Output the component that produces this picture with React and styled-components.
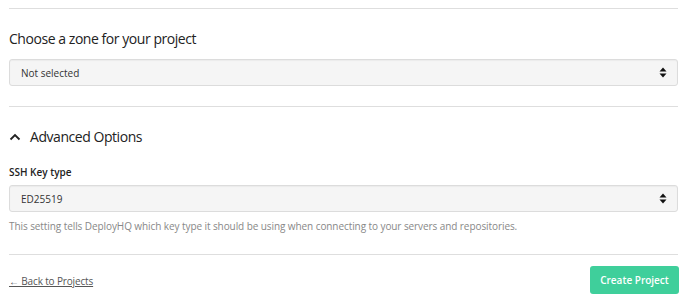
import styled, { createGlobalStyle } from "styled-components"

const GlobalStyle = createGlobalStyle`
  body {
    margin: 0;
    background: #fff;
    font-family: "Open Sans", "Noto Sans", sans-serif;
    color: #333;
  }
`

const Page = styled.div`
  padding: 8px 2px 0 9px;
`

const Rule = styled.hr`
  border: 0;
  border-top: 1px solid #dedede;
  margin: 0;
`

const Section = styled.section`
  padding: ${(p) => p.$pad || "20px 0 20px"};
`

const Heading = styled.h2`
  display: flex;
  align-items: center;
  gap: 9px;
  margin: 0 0 ${(p) => p.$gap || "10px"};
  font-size: 14px;
  font-weight: 400;
  line-height: 20px;
  color: #222;
  letter-spacing: -0.45px;
`

const Label = styled.label`
  display: block;
  font-size: 10px;
  font-weight: 600;
  line-height: 16px;
  margin-bottom: 5px;
  color: #222;
`

const SelectBox = styled.div`
  height: 27px;
  box-sizing: border-box;
  border: 1px solid #dcdcdc;
  border-radius: 3px;
  background: #f5f5f5;
  box-shadow: inset 0 1px 1px rgba(0, 0, 0, 0.04);
  display: flex;
  align-items: center;
  justify-content: space-between;
  padding: 0 10px 0 11px;
  font-size: 10px;
  color: #333;
`

const Help = styled.p`
  margin: 7px 0 0;
  font-size: 10px;
  line-height: 14px;
  color: #888;
  letter-spacing: -0.08px;
`

const Footer = styled.div`
  display: flex;
  justify-content: space-between;
  align-items: center;
  padding: 11px 0 0;
`

const BackLink = styled.a`
  font-size: 10px;
  color: #555;
  text-decoration: underline;
  letter-spacing: -0.15px;
  padding-top: 1px;
`

const CreateButton = styled.button`
  height: 28px;
  width: 89px;
  border: 0;
  border-radius: 3px;
  background: #3fcf9b;
  color: #fff;
  font-family: inherit;
  font-size: 10px;
  font-weight: 600;
  margin-right: -1px;
`

const Arrows = () => (
  <svg width="8" height="11" viewBox="0 0 8 11">
    <path d="M4 0.5 L7.5 4.5 H0.5 Z M4 10.5 L7.5 6.5 H0.5 Z" fill="#111" />
  </svg>
)

const ChevronUp = () => (
  <svg width="12" height="8" viewBox="0 0 12 8">
    <path d="M1.5 6.5 L6 2 L10.5 6.5" fill="none" stroke="#222" strokeWidth="1.8" />
  </svg>
)

const App = () => (
  <Page>
    <GlobalStyle />
    <Rule />
    <Section $pad="20px 0 20px">
      <Heading $gap="10px">Choose a zone for your project</Heading>
      <SelectBox>
        Not selected
        <Arrows />
      </SelectBox>
    </Section>
    <Rule />
    <Section $pad="20px 0 21px">
      <Heading $gap="17px">
        <ChevronUp />
        Advanced Options
      </Heading>
      <Label>SSH Key type</Label>
      <SelectBox>
        ED25519
        <Arrows />
      </SelectBox>
      <Help>
        This setting tells DeployHQ which key type it should be using when connecting to your servers and
        repositories.
      </Help>
    </Section>
    <Rule />
    <Footer>
      <BackLink href="#">← Back to Projects</BackLink>
      <CreateButton>Create Project</CreateButton>
    </Footer>
  </Page>
)

export default App
